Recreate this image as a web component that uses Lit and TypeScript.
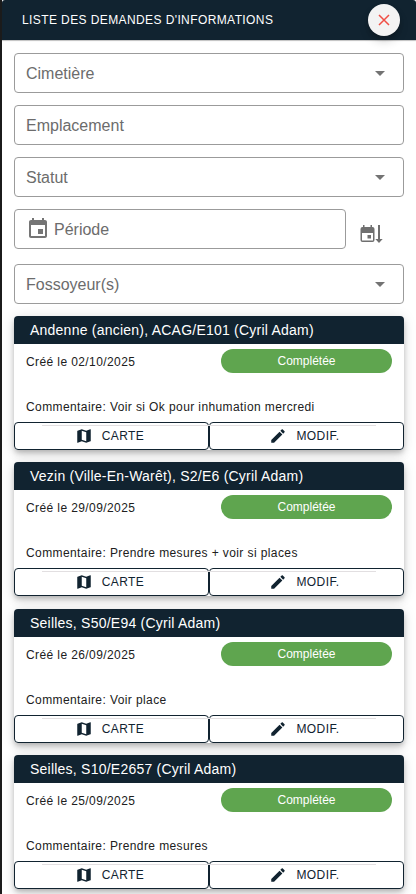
import { LitElement, html, css, svg } from "lit";
import { customElement, property } from "lit/decorators.js";

const CALENDAR = svg`<path d="M19 3h-1V1h-2v2H8V1H6v2H5c-1.11 0-2 .9-2 2v14c0 1.1.89 2 2 2h14c1.1 0 2-.9 2-2V5c0-1.1-.9-2-2-2zm0 16H5V8h14v11zm-2-7h-5v5h5v-5z"/>`;
const MAP = svg`<path d="M20.5 3l-.16.03L15 5.1 9 3 3.36 4.9c-.21.07-.36.25-.36.48V20.5c0 .28.22.5.5.5l.16-.03L9 18.9l6 2.1 5.64-1.9c.21-.07.36-.25.36-.48V3.5c0-.28-.22-.5-.5-.5zM15 19l-6-2.11V5l6 2.11V19z"/>`;
const PENCIL = svg`<path d="M3 17.25V21h3.75L17.81 9.94l-3.75-3.75L3 17.25zM20.71 7.04c.39-.39.39-1.02 0-1.41l-2.34-2.34c-.39-.39-1.02-.39-1.41 0l-1.83 1.83 3.75 3.75 1.83-1.83z"/>`;

@customElement("filter-field")
class FilterField extends LitElement {
  @property() label = "";
  @property() kind = "text";

  static styles = css`
    :host { display: block; }
    .field {
      box-sizing: border-box;
      height: 40px;
      border: 1px solid #9b9b9b;
      border-radius: 4px;
      display: flex;
      align-items: center;
      padding: 0 18px 0 11px;
      font-size: 16px;
      color: #6c6c6c;
    }
    .label { flex: 1; padding-top: 2px; }
    .arrow {
      width: 0;
      height: 0;
      border: 5px solid transparent;
      border-top-color: #737373;
      border-bottom: 0;
      margin-top: 1px;
    }
    .calendar { width: 24px; height: 24px; fill: #757575; margin: 0 4px 0 0; }
  `;

  render() {
    return html`<div class="field">
      ${this.kind === "date" ? html`<svg class="calendar" viewBox="0 0 24 24">${CALENDAR}</svg>` : ""}
      <span class="label">${this.label}</span>
      ${this.kind === "select" ? html`<span class="arrow"></span>` : ""}
    </div>`;
  }
}

@customElement("request-card")
class RequestCard extends LitElement {
  @property() heading = "";
  @property() created = "";
  @property() comment = "";

  static styles = css`
    :host {
      display: block;
      height: 134px;
      border-radius: 4px;
      background: #fff;
      box-shadow: 0 3px 5px -1px rgba(0, 0, 0, 0.2), 0 5px 8px rgba(0, 0, 0, 0.1), 0 1px 14px rgba(0, 0, 0, 0.1);
      color: #202020;
      font-size: 12px;
      letter-spacing: 0.4px;
    }
    .heading {
      height: 28px;
      line-height: 28px;
      padding-left: 16px;
      background: #112330;
      color: #fff;
      border-radius: 4px 4px 0 0;
      font-size: 14px;
      letter-spacing: 0.23px;
      white-space: nowrap;
    }
    .summary {
      display: flex;
      justify-content: space-between;
      padding: 5px 12px 0;
      height: 24px;
      line-height: 26px;
    }
    .status {
      width: 171px;
      height: 24px;
      line-height: 24px;
      border-radius: 12px;
      background: #5fa54f;
      color: #fff;
      text-align: center;
      letter-spacing: 0;
    }
    .comment { padding: 26px 12px 0; height: 23px; line-height: 16px; white-space: nowrap; }
    .actions { display: grid; grid-template-columns: 1fr 1fr; position: relative; }
    .actions::after {
      content: "";
      position: absolute;
      left: 28px;
      right: 28px;
      top: 3px;
      height: 1px;
      background: #e2dfe1;
    }
    .action {
      box-sizing: border-box;
      height: 28px;
      border: 1px solid #112330;
      border-radius: 4px;
      background: #fff;
      color: #112330;
      display: flex;
      align-items: center;
      justify-content: center;
      gap: 9px;
      padding-right: 4px;
    }
    .action svg { width: 18px; height: 18px; fill: #112330; }
  `;

  render() {
    return html`
      <div class="heading">${this.heading}</div>
      <div class="summary">
        <span>Créé le ${this.created}</span>
        <span class="status">Complétée</span>
      </div>
      <div class="comment">Commentaire: ${this.comment}</div>
      <div class="actions">
        <div class="action"><svg viewBox="0 0 24 24">${MAP}</svg><span>CARTE</span></div>
        <div class="action"><svg viewBox="0 0 24 24">${PENCIL}</svg><span>MODIF.</span></div>
      </div>
    `;
  }
}

const REQUESTS = [
  { heading: "Andenne (ancien), ACAG/E101 (Cyril Adam)", created: "02/10/2025", comment: "Voir si Ok pour inhumation mercredi" },
  { heading: "Vezin (Ville-En-Warêt), S2/E6 (Cyril Adam)", created: "29/09/2025", comment: "Prendre mesures + voir si places" },
  { heading: "Seilles, S50/E94 (Cyril Adam)", created: "26/09/2025", comment: "Voir place" },
  { heading: "Seilles, S10/E2657 (Cyril Adam)", created: "25/09/2025", comment: "Prendre mesures" },
];

@customElement("app-root")
class AppRoot extends LitElement {
  static styles = css`
    :host {
      display: block;
      box-sizing: border-box;
      height: 894px;
      overflow: hidden;
      border-left: 2px solid #1b1b1b;
      background: #fff;
      font-family: "Liberation Sans", Arial, sans-serif;
    }
    .bar {
      box-sizing: border-box;
      height: 40px;
      padding: 0 16px 0 20px;
      display: flex;
      align-items: center;
      justify-content: space-between;
      background: #112330;
      color: #fff;
      font-size: 12px;
      letter-spacing: 0.4px;
      border-radius: 3px 3px 0 0;
      box-shadow: 0 1px 1px rgba(0, 0, 0, 0.25);
    }
    .close {
      width: 32px;
      height: 32px;
      border-radius: 50%;
      background: #f3f3f3;
      display: flex;
      align-items: center;
      justify-content: center;
      box-shadow: 0 3px 5px -1px rgba(0, 0, 0, 0.2), 0 6px 10px rgba(0, 0, 0, 0.14);
    }
    .close svg { width: 12px; height: 12px; stroke: #f04e45; stroke-width: 1.5; }
    .filters { display: flex; flex-direction: column; gap: 12px; padding: 13px 12px 0; }
    .period { display: flex; margin-bottom: 3px; }
    .period filter-field { width: 331.5px; }
    .sort { width: 24px; height: 24px; margin: 13px 0 0 13.5px; fill: #6f6f6f; }
    .cards { display: flex; flex-direction: column; gap: 12.33px; padding: 12px 12px 0; }
  `;

  render() {
    return html`
      <header class="bar">
        <span>LISTE DES DEMANDES D'INFORMATIONS</span>
        <span class="close"><svg viewBox="0 0 12 12"><path d="M1 1L11 11M11 1L1 11" /></svg></span>
      </header>
      <section class="filters">
        <filter-field label="Cimetière" kind="select"></filter-field>
        <filter-field label="Emplacement"></filter-field>
        <filter-field label="Statut" kind="select"></filter-field>
        <div class="period">
          <filter-field label="Période" kind="date"></filter-field>
          <svg class="sort" viewBox="0 0 24 24">
            <path fill-rule="evenodd" d="M4 3h1.500v2h6V3H13v2h.5q2 0 2 2v11q0 2-2 2h-10q-2 0-2-2V7q0-2 2-2H4zM3 11v7.500h11V11zM8.500 13h3.500v3.500H8.500z" />
            <path d="M19 3h2v14h2.700L20 21l-3.700-4H19z" />
          </svg>
        </div>
        <filter-field label="Fossoyeur(s)" kind="select"></filter-field>
      </section>
      <main class="cards">
        ${REQUESTS.map((r) => html`<request-card .heading=${r.heading} .created=${r.created} .comment=${r.comment}></request-card>`)}
      </main>
    `;
  }
}
